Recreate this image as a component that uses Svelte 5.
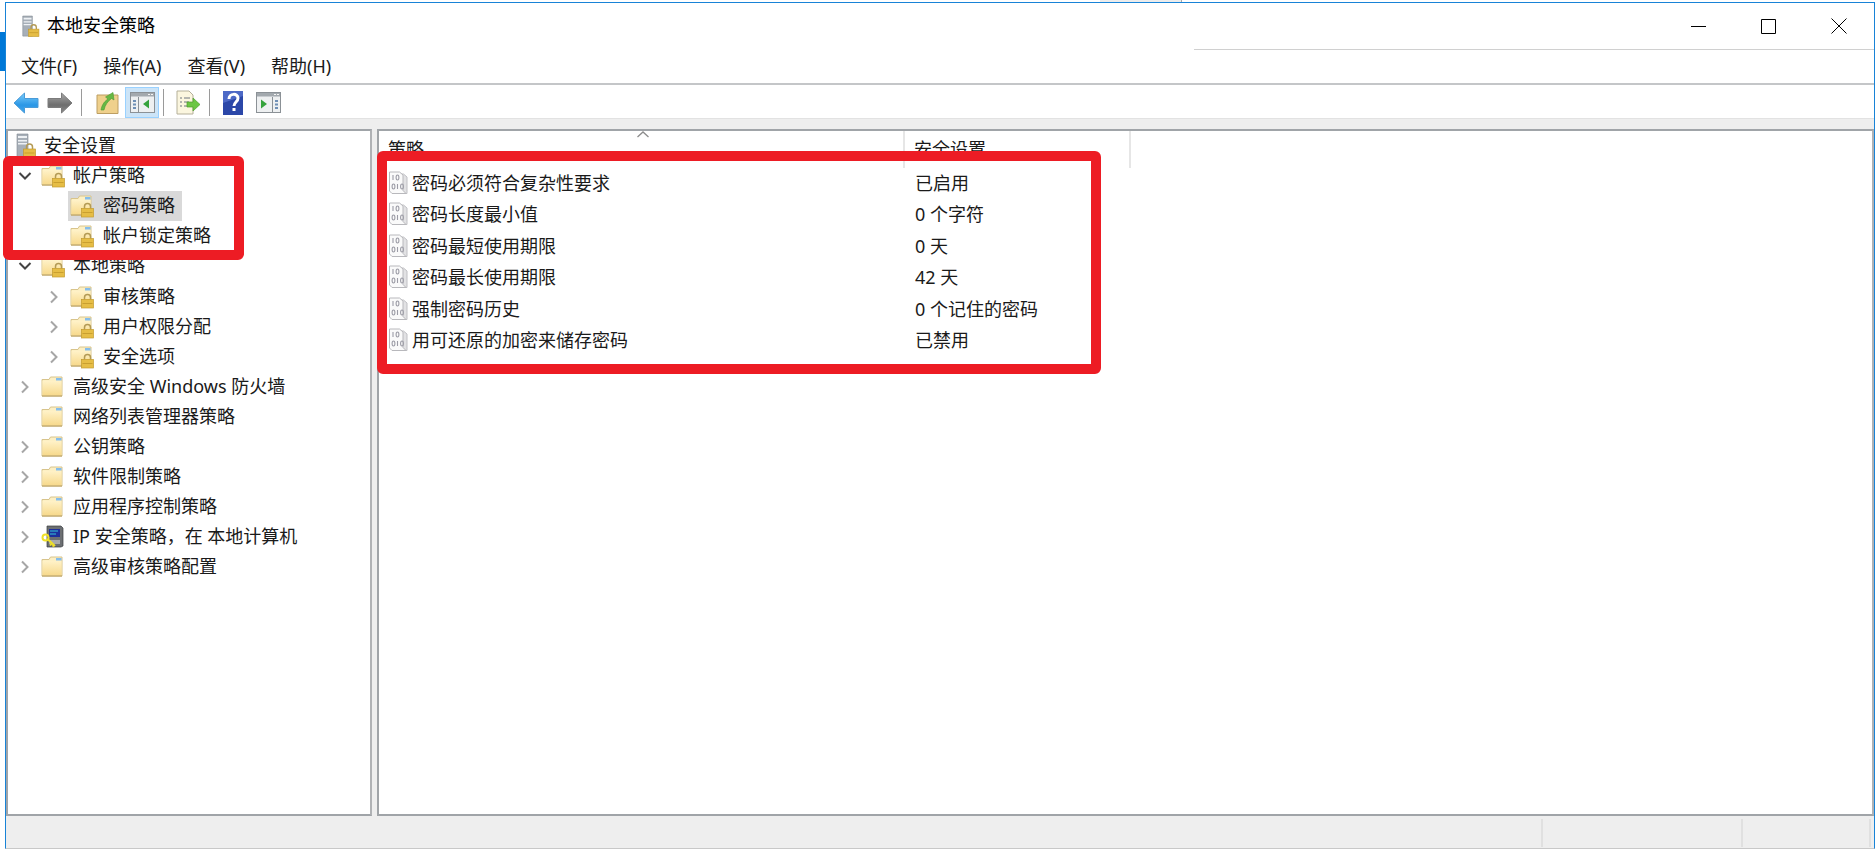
<script>
	const menus = ['文件(F)', '操作(A)', '查看(V)', '帮助(H)'];

	// arrow: '' none, 'open' expanded, 'closed' collapsed
	const tree = [
		{ label: '安全设置', level: 0, arrow: '', icon: 'server' },
		{ label: '帐户策略', level: 1, arrow: 'open', icon: 'locked' },
		{ label: '密码策略', level: 2, arrow: '', icon: 'locked', selected: true },
		{ label: '帐户锁定策略', level: 2, arrow: '', icon: 'locked' },
		{ label: '本地策略', level: 1, arrow: 'open', icon: 'locked' },
		{ label: '审核策略', level: 2, arrow: 'closed', icon: 'locked' },
		{ label: '用户权限分配', level: 2, arrow: 'closed', icon: 'locked' },
		{ label: '安全选项', level: 2, arrow: 'closed', icon: 'locked' },
		{ label: '高级安全 Windows 防火墙', level: 1, arrow: 'closed', icon: 'folder' },
		{ label: '网络列表管理器策略', level: 1, arrow: '', icon: 'folder' },
		{ label: '公钥策略', level: 1, arrow: 'closed', icon: 'folder' },
		{ label: '软件限制策略', level: 1, arrow: 'closed', icon: 'folder' },
		{ label: '应用程序控制策略', level: 1, arrow: 'closed', icon: 'folder' },
		{ label: 'IP 安全策略，在 本地计算机', level: 1, arrow: 'closed', icon: 'ip' },
		{ label: '高级审核策略配置', level: 1, arrow: 'closed', icon: 'folder' }
	];

	const policies = [
		['密码必须符合复杂性要求', '已启用'],
		['密码长度最小值', '0 个字符'],
		['密码最短使用期限', '0 天'],
		['密码最长使用期限', '42 天'],
		['强制密码历史', '0 个记住的密码'],
		['用可还原的加密来储存密码', '已禁用']
	];
</script>

{#snippet lock(x, y)}
	<path d="M{x + 3} {y + 5}v-2a3 3 0 0 1 6 0v2" fill="none" stroke="#b39a55" stroke-width="1.500" />
	<rect x={x} y={y + 5} width="12" height="8.500" fill="#e6bd45" stroke="#c29a2e" stroke-width="0.7" />
	<path d="M{x + 1} {y + 9}h10" stroke="#c99f2f" />
{/snippet}

{#snippet folder(locked)}
	<svg class="ico" width="24" height="24" viewBox="0 0 24 24" aria-hidden="true">
		<path d="M1 4.500h7l1.500-2.500h11.500v19h-20z" fill="#fdf0c4" stroke="#d8c48c" />
		<path d="M1.500 6h19v14.500h-19z" fill="url(#fold)" />
		<path d="M15 3h5.500v2.500H15z" fill="#86bdea" />
		<path d="M1 21h20" stroke="#b59a5a" />
		{#if locked}
			{@render lock(11.500, 9.500)}
		{/if}
	</svg>
{/snippet}

{#snippet server()}
	<svg class="ico" width="24" height="26" viewBox="0 0 24 26" aria-hidden="true">
		<path d="M2 1h11v23H2z" fill="#a7afb8" stroke="#7f8790" stroke-width="0.6" />
		<path d="M3 3h9v2H3zM3 7h9v1.500H3zM3 10h9v1.500H3z" fill="#eef1f4" />
		{@render lock(8.500, 11)}
	</svg>
{/snippet}

{#snippet ipIcon()}
	<svg class="ico" width="24" height="26" viewBox="0 0 24 26" aria-hidden="true">
		<path d="M6 2h14l2 2v18l-2 1H6z" fill="#6c6f72" stroke="#3b3d40" stroke-width="0.7" />
		<path d="M8 5h11v8H8z" fill="#1d2f9c" />
		<path d="M9 7h8M9 10h6" stroke="#35c5d8" />
		<path d="M8 16h11v4H8z" fill="#a7a9ab" />
		<circle cx="4.500" cy="13.500" r="3" fill="none" stroke="#efe02a" stroke-width="2" />
		<path d="M7 15.500l7 6.500M11 19l-2 2.500M13 21l-1.500 1.500" stroke="#efe02a" stroke-width="2" fill="none" />
	</svg>
{/snippet}

{#snippet binDoc()}
	<svg width="21" height="24" viewBox="0 0 21 24" aria-hidden="true">
		<path d="M4.500 3h11l3.500 3v16.500h-14.500z" fill="#e2e2e4" stroke="#c0c0c4" />
		<path d="M1.500 1h10l3.500 3v15.500l3 3h-14l-2.500-2.500z" fill="#fafafa" stroke="#b8b8bc" />
		<g fill="none" stroke="#9c9ca6" stroke-width="1.100">
			<path d="M5 4v5M9.500 13v5" />
			<ellipse cx="9.500" cy="6.500" rx="1.400" ry="2.500" />
			<ellipse cx="5.500" cy="15.500" rx="1.400" ry="2.500" />
			<ellipse cx="14" cy="15.500" rx="1.400" ry="2.500" />
		</g>
	</svg>
{/snippet}

{#snippet paneIcon(left)}
	<svg width="25" height="21" viewBox="0 0 25 21" aria-hidden="true">
		<rect x="0.500" y="0.500" width="24" height="20" fill="#eef0f1" stroke="#8b9196" />
		<path d="M1 1h23v3.500H1z" fill="#a3a9ae" />
		<path d="M18 2.500h2M21 2.500h2" stroke="#f4f4f4" />
		<path d={left ? 'M8.500 5v15' : 'M16.500 5v15'} stroke="#8b9196" />
		{#if left}
			<path d="M3 8h3v2H3zM3 11.500h3v2H3zM3 15h3v2H3z" fill="#6f8fb5" />
			<path d="M19 7.500v9l-6-4.500z" fill="#36a33c" />
		{:else}
			<path d="M19 8h3v2h-3zM19 11.500h3v2h-3zM19 15h3v2h-3z" fill="#6f8fb5" />
			<path d="M5 7.500v9l6-4.500z" fill="#36a33c" />
		{/if}
	</svg>
{/snippet}

<svg class="defs" width="0" height="0" aria-hidden="true">
	<defs>
		<linearGradient id="fold" x1="0" y1="0" x2="0" y2="1">
			<stop offset="0" stop-color="#fff2c8" />
			<stop offset="1" stop-color="#f7d98c" />
		</linearGradient>
		<linearGradient id="blue" x1="0" y1="0" x2="0" y2="1">
			<stop offset="0" stop-color="#7ccdfb" />
			<stop offset="0.6" stop-color="#2b97e6" />
			<stop offset="1" stop-color="#3fa6ee" />
		</linearGradient>
		<linearGradient id="grey" x1="0" y1="0" x2="0" y2="1">
			<stop offset="0" stop-color="#a8a8a8" />
			<stop offset="0.6" stop-color="#6e6e6e" />
			<stop offset="1" stop-color="#8c8c8c" />
		</linearGradient>
	</defs>
</svg>

<div class="win">
	<header class="titlebar">
		<svg class="appicon" width="21" height="25" viewBox="0 0 24 26" aria-hidden="true">
			<path d="M2 1h11v23H2z" fill="#a7afb8" stroke="#7f8790" stroke-width="0.6" />
			<path d="M3 3h9v2H3zM3 7h9v1.500H3zM3 10h9v1.500H3z" fill="#eef1f4" />
			{@render lock(8.500, 11)}
		</svg>
		<span class="title">本地安全策略</span>
		<div class="caption">
			<svg width="15" height="15" viewBox="0 0 15 15" aria-hidden="true"><path d="M0 7.500h15" stroke="#000" /></svg>
			<svg width="15" height="15" viewBox="0 0 15 15" aria-hidden="true"><path d="M.5.500h14v14H.5z" fill="none" stroke="#000" /></svg>
			<svg width="16" height="16" viewBox="0 0 16 16" aria-hidden="true"><path d="M.5.500l15 15M15.500.500l-15 15" stroke="#000" /></svg>
		</div>
	</header>

	<nav class="menubar">
		{#each menus as m}
			<span>{m}</span>
		{/each}
	</nav>

	<div class="toolbar">
		<button class="tb" aria-label="后退">
			<svg width="26" height="22" viewBox="0 0 26 22" aria-hidden="true">
				<path d="M1 11L11.500 1v5.500H25v9H11.500V21z" fill="url(#blue)" stroke="#4a9bd8" />
			</svg>
		</button>
		<button class="tb" aria-label="前进">
			<svg width="26" height="22" viewBox="0 0 26 22" aria-hidden="true">
				<path d="M25 11L14.500 1v5.500H1v9h13.500V21z" fill="url(#grey)" stroke="#7c7c7c" />
			</svg>
		</button>
		<i class="sep"></i>
		<button class="tb up" aria-label="向上">
			<svg width="23" height="23" viewBox="0 0 23 23" aria-hidden="true">
				<path d="M1 4h21v18.500H1z" fill="#efd08c" stroke="#bd9e62" />
				<path d="M5 19c1-6 4-9 7-11l-2.500-2L17 1.500l1 7.500-2.500-1.500C12 10 9 14 8 19z" fill="#66b844" stroke="#4a9a30" stroke-width="0.6" />
			</svg>
		</button>
		<button class="tb on" aria-label="显示/隐藏控制台树">{@render paneIcon(true)}</button>
		<i class="sep"></i>
		<button class="tb doc" aria-label="导出列表">
			<svg width="25" height="25" viewBox="0 0 25 25" aria-hidden="true">
				<path d="M1 1h12l4 4v19H1z" fill="#fbf6df" stroke="#b5b09a" />
				<path d="M4 8h2M8 8h6M4 12h2M8 12h5M4 16h2M8 16h4" stroke="#6f7680" />
				<path d="M11 12h6V8l7 6.500-7 6.500v-4h-6z" fill="#6cc644" stroke="#4e9f2d" stroke-width="0.7" />
			</svg>
		</button>
		<i class="sep"></i>
		<button class="tb help" aria-label="帮助">
			<svg width="20" height="24" viewBox="0 0 20 24" aria-hidden="true">
				<rect width="20" height="24" fill="#2b47a8" />
				<path d="M0 0h20v5L0 12z" fill="#4d69c6" />
				<path d="M6 8c0-6 9-6 9-1 0 4-4 4-4 8" fill="none" stroke="#fff" stroke-width="3" />
				<path d="M9.500 17h3v3h-3z" fill="#fff" />
			</svg>
		</button>
		<button class="tb last" aria-label="显示/隐藏操作窗格">{@render paneIcon(false)}</button>
	</div>

	<div class="band"></div>

	<main class="panes">
		<aside class="pane left">
			{#each tree as t}
				<div class="node lv{t.level}">
					<span class="arrow">
						{#if t.arrow === 'open'}
							<svg width="14" height="10" viewBox="0 0 14 10" aria-hidden="true"><path d="M1.500 2L7 7.500 12.500 2" fill="none" stroke="#444" stroke-width="2" /></svg>
						{:else if t.arrow === 'closed'}
							<svg width="10" height="14" viewBox="0 0 10 14" aria-hidden="true"><path d="M2 1.500L7.500 7 2 12.500" fill="none" stroke="#a6a6a6" stroke-width="2" /></svg>
						{/if}
					</span>
					<span class="hit" class:sel={t.selected}>
						<span class="nodeico">
							{#if t.icon === 'server'}
								{@render server()}
							{:else if t.icon === 'ip'}
								{@render ipIcon()}
							{:else}
								{@render folder(t.icon === 'locked')}
							{/if}
						</span>
						<span class="label">{t.label}</span>
					</span>
				</div>
			{/each}
		</aside>

		<section class="pane right">
			<div class="thead">
				<span class="th first">策略</span>
				<span class="th second">安全设置</span>
				<span class="caret">
					<svg width="12" height="7" viewBox="0 0 12 7" aria-hidden="true"><path d="M.5 6L6 1l5.500 5" fill="none" stroke="#8c8c8c" stroke-width="1.300" /></svg>
				</span>
			</div>
			{#each policies as p}
				<div class="row">
					<span class="name">{@render binDoc()}<span>{p[0]}</span></span>
					<span class="val">{p[1]}</span>
				</div>
			{/each}
		</section>
	</main>

	<footer class="status">
		<span class="cell grow"></span>
		<span class="cell mid"></span>
		<span class="cell end"></span>
	</footer>
</div>

<!-- window behind, and the red marks drawn over the screenshot -->
<div class="peek"></div>
<div class="accent"></div>
<div class="mark one"></div>
<div class="mark two"></div>

<style>
	:global(body) {
		background: #fff;
		overflow: hidden;
	}

	.defs {
		position: absolute;
	}

	.win {
		box-sizing: border-box;
		width: 1870px;
		height: 847px;
		margin: 2px 0 0 5px;
		display: flex;
		flex-direction: column;
		border: 1px solid #1883d7;
		border-bottom-color: #c8c8c8;
		background: #fff;
		color: #1a1a1a;
		font: 18px/24px 'Noto Sans', 'Noto Sans CJK SC', sans-serif;
	}

	.titlebar {
		height: 46px;
		display: flex;
		align-items: center;
		position: relative;
	}

	.titlebar::after {
		content: '';
		position: absolute;
		left: 1188px;
		right: 0;
		bottom: -1px;
		height: 1px;
		background: #d0d0d0;
	}

	.appicon {
		margin-left: 15px;
	}

	.title {
		margin: -2px 0 0 5px;
		color: #000;
	}

	.caption {
		margin-left: auto;
		display: flex;
		align-items: center;
		gap: 55px;
		padding-right: 27px;
	}

	.menubar {
		height: 36px;
		display: flex;
		align-items: center;
		gap: 26px;
		padding-left: 15px;
		box-sizing: border-box;
		border-bottom: 2px solid #c4c6c8;
	}

	.menubar span {
		white-space: nowrap;
	}

	.toolbar {
		height: 33px;
		display: flex;
		align-items: center;
		padding: 2px 0 0 3px;
		box-sizing: border-box;
	}

	.tb {
		width: 34px;
		height: 31px;
		padding: 0;
		flex: none;
		display: flex;
		align-items: center;
		justify-content: center;
		background: none;
		border: 1px solid transparent;
		box-sizing: border-box;
	}

	.tb.on {
		background: #cce4f7;
		border-color: #99d1ff;
		margin-left: 1px;
	}

	.tb.up {
		margin-left: 8px;
	}

	.tb.doc {
		margin-left: 7px;
	}

	.tb.help {
		margin-left: 6px;
	}

	.tb.last {
		margin-left: 1px;
	}

	.sep {
		width: 1px;
		height: 27px;
		margin-left: 4px;
		background: #9a9a9a;
	}

	.band {
		height: 11px;
		background: #eeeeee;
		border-top: 1px solid #e2e2e2;
		box-sizing: border-box;
	}

	.panes {
		flex: 1;
		min-height: 0;
		display: flex;
		gap: 5px;
		background: #eeeeee;
	}

	.pane {
		box-sizing: border-box;
		background: #fff;
		border: 2px solid #a0a4a8;
		border-right-color: #b0b2b5;
		overflow: hidden;
	}

	.left {
		width: 366px;
		flex: none;
	}

	.right {
		flex: 1;
	}

	.node {
		height: 30.1px;
		display: flex;
		align-items: center;
	}

	.arrow {
		width: 29px;
		flex: none;
		display: flex;
		justify-content: center;
	}

	.hit {
		height: 30px;
		display: flex;
		align-items: center;
		padding-right: 7px;
	}

	.hit.sel {
		background: #d9d9d9;
	}

	.nodeico {
		width: 28px;
		flex: none;
		display: flex;
		justify-content: center;
	}

	.lv0 .arrow {
		display: none;
	}

	.lv0 {
		padding-left: 7px;
	}

	.lv0 .nodeico {
		width: 24px;
		margin-right: 5px;
	}

	.lv1 {
		padding-left: 2px;
	}

	.lv1 .nodeico {
		margin-right: 6px;
	}

	.lv2 {
		padding-left: 31px;
	}

	.lv2 .nodeico {
		margin-right: 7px;
	}

	.label {
		white-space: nowrap;
		line-height: 28px;
		height: 30px;
	}

	.thead {
		height: 36px;
		position: relative;
		display: flex;
		box-sizing: border-box;
	}

	.th {
		height: 37px;
		padding: 6px 0 0 9px;
		box-sizing: border-box;
		border-right: 2px solid #e6e6e6;
	}

	.first {
		width: 526px;
	}

	.second {
		width: 226px;
	}

	.caret {
		position: absolute;
		left: 258px;
		top: 0;
		display: flex;
	}

	.row {
		height: 31.5px;
		display: flex;
		align-items: center;
	}

	.name {
		width: 526px;
		display: flex;
		align-items: center;
		gap: 3px;
		padding-left: 9px;
		box-sizing: border-box;
	}

	.name svg {
		flex: none;
	}

	.val {
		padding-left: 10px;
	}

	.status {
		height: 32px;
		flex: none;
		display: flex;
		background: #eeeeee;
		padding: 3px 0 1px;
		box-sizing: border-box;
	}

	.cell {
		border-right: 2px solid #e0e0e0;
		box-sizing: border-box;
	}

	.grow {
		width: 1537px;
	}

	.mid {
		width: 200px;
	}

	.end {
		width: 128px;
	}

	.peek {
		position: absolute;
		left: 1100px;
		top: 0;
		width: 81px;
		height: 2px;
		background: #ececec;
		border-right: 1px solid #a8a8a8;
	}

	.accent {
		position: absolute;
		left: 0;
		top: 32px;
		width: 5px;
		height: 39px;
		background: #0078d7;
	}

	.mark {
		position: absolute;
		box-sizing: border-box;
		border: 10px solid #ed1c24;
		border-radius: 6px;
		pointer-events: none;
	}

	.one {
		left: 3px;
		top: 156px;
		width: 241px;
		height: 104px;
	}

	.two {
		left: 377px;
		top: 151px;
		width: 724px;
		height: 223px;
	}
</style>
